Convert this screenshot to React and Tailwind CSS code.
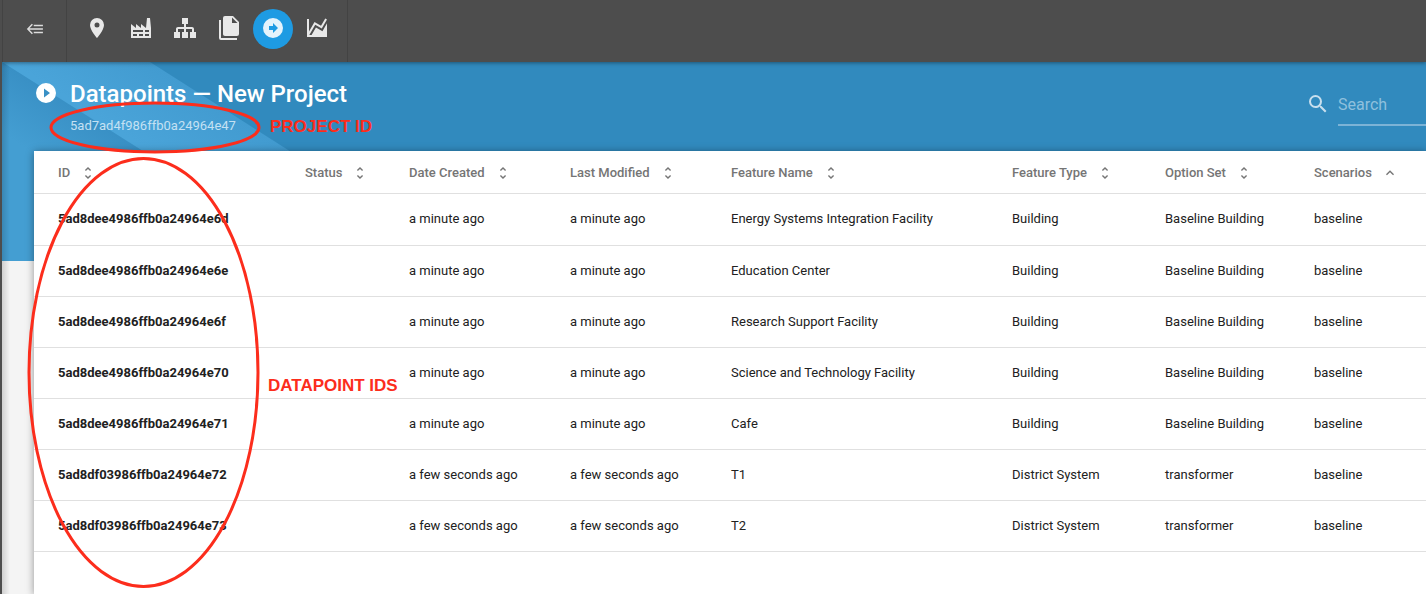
import React from "react";

const ICONS = {
  back: "M8.2 5.6 2.2 12l6 6.4 1.3-1.3L5.4 12.9H12v-1.8H5.4l4.1-4.2zM10.500 7h11v1.800h-11zM12 11.100h9.500v1.800H12zM10.500 15.200h11v1.800h-11z",
  marker: "M12,11.5A2.5,2.5 0 0,1 9.5,9A2.5,2.5 0 0,1 12,6.5A2.5,2.5 0 0,1 14.5,9A2.5,2.5 0 0,1 12,11.5M12,2A7,7 0 0,0 5,9C5,14.25 12,22 12,22C12,22 19,14.25 19,9A7,7 0 0,0 12,2Z",
  factory: "M4,18V20H8V18H4M4,14V16H14V14H4M10,18V20H14V18H10M16,14V16H20V14H16M16,18V20H20V18H16M2,22V8L7,12V8L12,12V8L17,12L18,2H21L22,12V22H2Z",
  sitemap: "M9,2V8H11V11H5C3.89,11 3,11.89 3,13V16H1V22H7V16H5V13H11V16H9V22H15V16H13V13H19V16H17V22H23V16H21V13C21,11.89 20.11,11 19,11H13V8H15V2H9Z",
  files: "M15,7H20.5L15,1.5V7M8,0H16L22,6V18A2,2 0 0,1 20,20H8C6.89,20 6,19.1 6,18V2A2,2 0 0,1 8,0M4,4V22H20V24H4A2,2 0 0,1 2,22V4H4Z",
  arrow: "M12,2A10,10 0 0,1 22,12A10,10 0 0,1 12,22A10,10 0 0,1 2,12A10,10 0 0,1 12,2M17,12L12,7V10H8V14H12V17L17,12Z",
  chart: "M17.45,15.18L22,7.31V19L22,21H2V3H4V15.54L9.5,6L16,9.78L20.24,2.45L21.97,3.45L16.74,12.5L10.23,8.75L4.31,19H6.57L10.96,11.44L17.45,15.18Z",
  play: "M10,16.5V7.5L16,12M12,2A10,10 0 0,0 2,12A10,10 0 0,0 12,22A10,10 0 0,0 22,12A10,10 0 0,0 12,2Z",
  search: "M15.5 14h-.79l-.28-.27A6.47 6.47 0 0 0 16 9.5 6.5 6.5 0 1 0 9.5 16c1.61 0 3.09-.59 4.23-1.57l.27.28v.79l5 4.99L20.49 19l-4.99-5zm-6 0C7.01 14 5 11.99 5 9.5S7.01 5 9.5 5 14 7.01 14 9.5 11.99 14 9.5 14z",
  sort: "M12 5.83 15.17 9l1.41-1.41L12 3 7.41 7.59 8.83 9 12 5.83zm0 12.34L8.83 15l-1.41 1.41L12 21l4.59-4.59L15.17 15 12 18.17z",
  up: "M12 8l-6 6 1.41 1.41L12 10.83l4.59 4.58L18 14z",
};

function Icon({ name, className }) {
  return (
    <svg viewBox="0 0 24 24" fill="currentColor" aria-hidden="true" className={className}>
      <path d={ICONS[name]} fillRule={name === "back" ? "nonzero" : "evenodd"} />
    </svg>
  );
}

const NAV = [
  ["marker", "Map"],
  ["factory", "Facilities"],
  ["sitemap", "Systems"],
  ["files", "Option sets"],
  ["arrow", "Datapoints"],
  ["chart", "Results"],
];

const COLUMNS = [
  ["ID", "w-[247px]"],
  ["Status", "w-[104px]"],
  ["Date Created", "w-[161px]"],
  ["Last Modified", "w-[161px]"],
  ["Feature Name", ""],
  ["Feature Type", "w-[153px]"],
  ["Option Set", "w-[149px]"],
  ["Scenarios", "w-[136px]"],
];

const MIN = "a minute ago";
const SEC = "a few seconds ago";
const ROWS = [
  ["5ad8dee4986ffb0a24964e6d", MIN, "Energy Systems Integration Facility", "Building", "Baseline Building"],
  ["5ad8dee4986ffb0a24964e6e", MIN, "Education Center", "Building", "Baseline Building"],
  ["5ad8dee4986ffb0a24964e6f", MIN, "Research Support Facility", "Building", "Baseline Building"],
  ["5ad8dee4986ffb0a24964e70", MIN, "Science and Technology Facility", "Building", "Baseline Building"],
  ["5ad8dee4986ffb0a24964e71", MIN, "Cafe", "Building", "Baseline Building"],
  ["5ad8df03986ffb0a24964e72", SEC, "T1", "District System", "transformer"],
  ["5ad8df03986ffb0a24964e73", SEC, "T2", "District System", "transformer"],
];

function Toolbar() {
  return (
    <header className="relative z-10 flex h-[62px] bg-[#4d4d4d] text-[#e8e8e8] shadow-[0_1px_4px_rgba(0,0,0,0.4)]">
      <div className="flex w-[65px] items-center justify-center border-x border-[#434343] pb-1">
        <button aria-label="Collapse menu" className="text-[#dcdcdc]">
          <Icon name="back" className="size-5" />
        </button>
      </div>
      <nav className="flex gap-1 border-r border-[#434343] px-[10px] pt-[9px]">
        {NAV.map(([icon, label]) => (
          <button
            key={icon}
            aria-label={label}
            className={
              icon === "arrow"
                ? "flex size-10 items-center justify-center rounded-full bg-[#1e9be3] pb-[2px] text-[#e4f3fc]"
                : "flex size-10 items-center justify-center rounded-full pb-[2px]"
            }
          >
            <Icon name={icon} className="size-6" />
          </button>
        ))}
      </nav>
    </header>
  );
}

function Backdrop() {
  return (
    <svg aria-hidden="true" className="absolute top-0 left-0 h-[199px] w-[480px]" viewBox="0 0 480 199">
      <defs>
        <linearGradient id="lower" gradientUnits="userSpaceOnUse" x1="100" y1="63" x2="68" y2="114">
          <stop offset="0" stopColor="#3990c5" />
          <stop offset="1" stopColor="#449ed2" />
        </linearGradient>
        <linearGradient id="strip" gradientUnits="userSpaceOnUse" x1="148" y1="0" x2="108" y2="63">
          <stop offset="0" stopColor="#429bd0" />
          <stop offset="1" stopColor="#4aa4d9" />
        </linearGradient>
      </defs>
      <path d="M0 0 315 199H0z" fill="url(#lower)" />
      <path d="M0 0H148L460 199H315z" fill="url(#strip)" />
    </svg>
  );
}

function DataTable() {
  return (
    <table className="w-full table-fixed border-collapse text-left text-[13px] text-[#212121]">
      <thead>
        <tr className="h-[42px] border-b border-[#e0e0e0] text-[#757575]">
          {COLUMNS.map(([label, width]) => (
            <th key={label} className={`${width} pt-[2px] pl-6 font-medium whitespace-nowrap`}>
              <button className="flex items-center gap-[10px]">
                {label}
                <Icon name={label === "Scenarios" ? "up" : "sort"} className="size-4" />
              </button>
            </th>
          ))}
        </tr>
      </thead>
      <tbody>
        {ROWS.map(([id, time, name, type, option]) => (
          <tr key={id} className="h-[51px] border-b border-[#e0e0e0] whitespace-nowrap first:h-[52px]">
            <td className="pl-6 font-bold">{id}</td>
            <td />
            <td className="pl-6">{time}</td>
            <td className="pl-6">{time}</td>
            <td className="pl-6">{name}</td>
            <td className="pl-6">{type}</td>
            <td className="pl-6">{option}</td>
            <td className="pl-6">baseline</td>
          </tr>
        ))}
      </tbody>
    </table>
  );
}

function Annotations() {
  return (
    <div className="pointer-events-none absolute top-0 -left-[2px] z-20 font-['Liberation_Sans',Arial,sans-serif] text-[17px] leading-7 font-bold whitespace-nowrap text-[#fc2d1c]">
      <svg aria-hidden="true" className="h-[594px] w-[420px]" viewBox="0 0 420 594" fill="none" stroke="#fc2d1c" strokeWidth="3">
        <ellipse cx="155" cy="127.500" rx="104" ry="24.500" />
        <ellipse cx="143.500" cy="372.500" rx="114.500" ry="214" />
      </svg>
      <span className="absolute top-[113px] left-[270px]">PROJECT ID</span>
      <span className="absolute top-[372px] left-[268px]">DATAPOINT IDS</span>
    </div>
  );
}

export default function App() {
  return (
    <div className="relative flex min-h-screen flex-col overflow-hidden border-l-2 border-[#4d4d4d] bg-[#f4f4f4] font-[Roboto,sans-serif]">
      <Toolbar />
      <main className="relative flex grow flex-col">
        <div aria-hidden="true" className="absolute inset-x-0 top-0 h-[199px] bg-[#318abe]">
          <Backdrop />
        </div>
        <div aria-hidden="true" className="absolute inset-y-0 left-0 w-2 bg-linear-to-r from-black/15 to-transparent" />
        <div className="relative flex h-[89px] justify-between pl-8 text-white">
          <div className="flex gap-3 pt-4">
            <Icon name="play" className="mt-[3px] size-6" />
            <div>
              <h1 className="text-2xl leading-8 font-medium">Datapoints — New Project</h1>
              <p className="text-[13px] leading-8 text-[#c4e1f3]">5ad7ad4f986ffb0a24964e47</p>
            </div>
          </div>
          <label className="flex items-start gap-2 pt-[30px]">
            <Icon name="search" className="size-6 text-[#c8dfee]" />
            <input
              type="search"
              aria-label="Search"
              placeholder="Search"
              className="h-[34px] w-[88px] border-b-2 border-[#7cb3d6] bg-transparent pb-2 text-base outline-none placeholder:text-[#8fc0dd]"
            />
          </label>
        </div>
        <section className="relative ml-8 grow bg-white shadow-[0_1px_8px_rgba(0,0,0,0.4)]">
          <DataTable />
        </section>
      </main>
      <Annotations />
    </div>
  );
}
